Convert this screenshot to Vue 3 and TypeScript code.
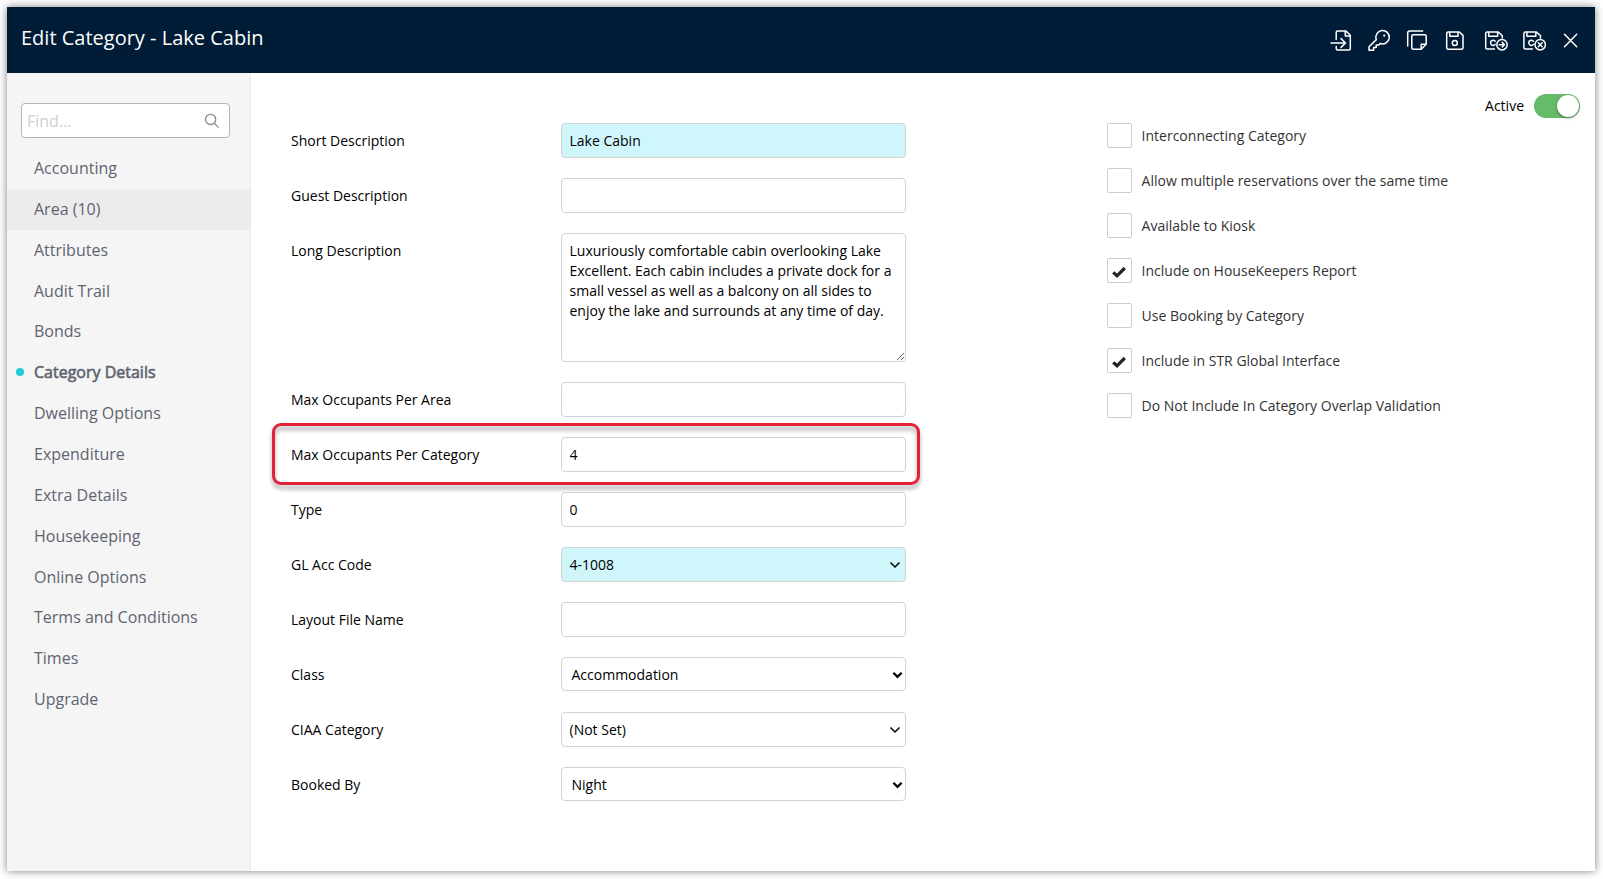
<script setup lang="ts">
import { ref } from 'vue'

interface Field {
  label: string
  kind: 'text' | 'area' | 'combo' | 'select'
  value: string
  required?: boolean
  marked?: boolean
}

interface Option {
  label: string
  checked: boolean
}

const navItems: string[] = [
  'Accounting', 'Area (10)', 'Attributes', 'Audit Trail', 'Bonds', 'Category Details',
  'Dwelling Options', 'Expenditure', 'Extra Details', 'Housekeeping', 'Online Options',
  'Terms and Conditions', 'Times', 'Upgrade',
]
const current = ref('Category Details')
const hovered = ref('Area (10)')
const search = ref('')
const active = ref(true)

const fields = ref<Field[]>([
  { label: 'Short Description', kind: 'text', value: 'Lake Cabin', required: true },
  { label: 'Guest Description', kind: 'text', value: '' },
  {
    label: 'Long Description',
    kind: 'area',
    value: 'Luxuriously comfortable cabin overlooking Lake Excellent. Each cabin includes a private dock for a small vessel as well as a balcony on all sides to enjoy the lake and surrounds at any time of day.',
  },
  { label: 'Max Occupants Per Area', kind: 'text', value: '' },
  { label: 'Max Occupants Per Category', kind: 'text', value: '4', marked: true },
  { label: 'Type', kind: 'text', value: '0' },
  { label: 'GL Acc Code', kind: 'combo', value: '4-1008', required: true },
  { label: 'Layout File Name', kind: 'text', value: '' },
  { label: 'Class', kind: 'select', value: 'Accommodation' },
  { label: 'CIAA Category', kind: 'combo', value: '(Not Set)' },
  { label: 'Booked By', kind: 'select', value: 'Night' },
])

const options = ref<Option[]>([
  { label: 'Interconnecting Category', checked: false },
  { label: 'Allow multiple reservations over the same time', checked: false },
  { label: 'Available to Kiosk', checked: false },
  { label: 'Include on HouseKeepers Report', checked: true },
  { label: 'Use Booking by Category', checked: false },
  { label: 'Include in STR Global Interface', checked: true },
  { label: 'Do Not Include In Category Overlap Validation', checked: false },
])
</script>

<template>
  <div class="page">
    <div class="dialog">
      <header class="bar">
        <h1 class="title">Edit Category - Lake Cabin</h1>
        <div class="tools">
          <svg class="tool" viewBox="0 0 28 24">
            <path d="M7.2 11.5V4.5Q7.2 3 8.7 3H17L21.3 7.3V20.6Q21.3 22.1 19.8 22.1H8.7Q7.2 22.1 7.2 20.6V18.5M16.3 3V8H21.3M2 15H16.6M12 10.6L16.5 15L12 19.4" />
          </svg>
          <svg class="tool" viewBox="0 0 28 24">
            <path d="M9.3 11.6A6.7 6.7 0 1 1 13.3 15.5L11.6 17.1H9.2V19.6H6.6V22.2H2V18.8Z" />
            <circle class="solid" cx="17.2" cy="7.6" r="1.1" />
          </svg>
          <svg class="tool" viewBox="0 0 28 24">
            <path d="M2.7 18V5Q2.7 3 4.7 3H17.6M8.3 6.7H19.7Q21.2 6.7 21.2 8.2V16.2L16.2 21.2H8.3Q6.8 21.2 6.8 19.7V8.2Q6.8 6.7 8.3 6.7ZM16.2 21V16.3H21" />
          </svg>
          <svg class="tool" viewBox="0 0 28 24">
            <path d="M5.2 4H16.4L20 7.4V19.8Q20 21.3 18.5 21.3H5.2Q3.7 21.3 3.7 19.8V5.5Q3.7 4 5.2 4ZM6.7 4V8.2H15V4" />
            <circle cx="11.8" cy="15" r="2.5" />
          </svg>
          <svg class="tool" viewBox="0 0 28 24">
            <path d="M13.5 21H6.2Q4.7 21 4.7 19.5V5.5Q4.7 4 6.2 4H17.3L21.3 7.8V10M7.7 4V8.2H16.6V4M14.2 13.2A2.6 2.6 0 1 0 14.2 16.4" />
            <circle cx="21" cy="16.7" r="5.2" />
            <path d="M18.2 16.7H23.5M21.2 14.4L23.5 16.7L21.2 19" />
          </svg>
          <svg class="tool" viewBox="0 0 28 24">
            <path d="M13.5 21H6.4Q4.9 21 4.9 19.5V5.5Q4.9 4 6.4 4H17.5L21.5 7.8V10M7.9 4V8.2H16.8V4M14.4 13.2A2.6 2.6 0 1 0 14.4 16.4" />
            <circle cx="21.2" cy="16.7" r="5.2" />
            <path d="M19.2 14.7L23.2 18.7M23.2 14.7L19.2 18.7" />
          </svg>
          <svg class="tool" viewBox="0 0 28 24">
            <path d="M7.5 6.3L19.7 18.7M19.7 6.3L7.5 18.7" />
          </svg>
        </div>
      </header>

      <div class="body">
        <aside class="side">
          <div class="find">
            <input v-model="search" class="find-input" placeholder="Find..." />
            <svg class="find-icon" viewBox="0 0 16 16">
              <circle cx="6.6" cy="6.4" r="5.1" />
              <path d="M10.2 10.2L14.6 14.6" />
            </svg>
          </div>
          <nav class="nav">
            <a
              v-for="item in navItems"
              :key="item"
              class="nav-item"
              :class="{ current: item === current, hovered: item === hovered }"
              @click="current = item"
            >{{ item }}</a>
          </nav>
        </aside>

        <main class="content">
          <section class="form">
            <div v-for="f in fields" :key="f.label" class="row" :class="{ marked: f.marked }">
              <label class="label">{{ f.label }}</label>
              <textarea v-if="f.kind === 'area'" v-model="f.value" class="control area" spellcheck="false"></textarea>
              <input v-else-if="f.kind === 'text'" v-model="f.value" class="control" :class="{ required: f.required }" />
              <div v-else class="control picker" :class="[f.kind, { required: f.required }]">
                <span>{{ f.value }}</span>
                <svg class="chevron" viewBox="0 0 12 8"><path d="M1.5 1.5L6 6L10.5 1.5" /></svg>
              </div>
            </div>
          </section>

          <section class="options">
            <label v-for="o in options" :key="o.label" class="option">
              <span class="box" @click="o.checked = !o.checked">
                <svg v-if="o.checked" class="tick" viewBox="0 0 14 12"><path d="M1.2 6.4L5 9.8L12.8 2" /></svg>
              </span>
              <span>{{ o.label }}</span>
            </label>
          </section>

          <div class="status">
            <span>Active</span>
            <span class="switch" :class="{ on: active }" @click="active = !active"><i class="knob"></i></span>
          </div>
        </main>
      </div>
    </div>
  </div>
</template>

<style>
body {
  background: #fff;
  overflow: hidden;
}
</style>

<style scoped>
* {
  box-sizing: border-box;
}

.page {
  min-height: 879px;
  padding: 7px;
}

.dialog {
  width: 1588px;
  height: 864px;
  display: flex;
  flex-direction: column;
  background: #fff;
  box-shadow: 0 0 8px rgba(0, 0, 0, 0.5);
  font-family: "Open Sans", "Noto Sans", sans-serif;
  font-size: 14px;
  color: #000;
}

.bar {
  height: 66px;
  flex: none;
  display: flex;
  justify-content: space-between;
  padding: 0 10px 0 14px;
  background: #001c36;
  color: #fff;
}

.title {
  margin: 16px 0 0;
  font-size: 20px;
  font-weight: 400;
  line-height: 30px;
}

.tools {
  display: flex;
  gap: 10px;
  margin-top: 21px;
}

.tool {
  width: 28px;
  height: 24px;
  fill: none;
  stroke: #fff;
  stroke-width: 1.5;
  stroke-linejoin: round;
  stroke-linecap: round;
}

.tool .solid {
  fill: #fff;
  stroke: none;
}

.body {
  flex: 1;
  display: flex;
}

.side {
  width: 244px;
  flex: none;
  padding-top: 30px;
  background: #f5f5f5;
  border-right: 1px solid #ebebeb;
}

.find {
  width: 209px;
  height: 35px;
  margin: 0 0 10px 14px;
  display: flex;
  align-items: center;
  padding: 0 9px 0 5px;
  background: #fff;
  border: 1px solid #b5b5b5;
  border-radius: 4px;
}

.find-input {
  flex: 1;
  min-width: 0;
  padding: 0;
  border: 0;
  outline: 0;
  background: none;
  font: 16px "Open Sans", sans-serif;
}

.find-input::placeholder {
  color: #cfcfcf;
}

.find-icon {
  width: 16px;
  height: 16px;
  fill: none;
  stroke: #8c8c8c;
  stroke-width: 1.3;
}

.nav-item {
  position: relative;
  display: block;
  height: 40.87px;
  padding-left: 27px;
  font-size: 16px;
  line-height: 40px;
  color: #5f6470;
}

.nav-item.hovered {
  background: #ececec;
}

.nav-item.current {
  -webkit-text-stroke: 0.6px #5f6470;
}

.nav-item.current::before {
  content: "";
  position: absolute;
  left: 9px;
  top: 16px;
  width: 8px;
  height: 8px;
  border-radius: 50%;
  background: #1fcbd6;
}

.content {
  flex: 1;
  display: flex;
  align-items: flex-start;
  padding-left: 40px;
}

.form {
  width: 615px;
  display: flex;
  flex-direction: column;
  gap: 20px;
  padding-top: 50px;
}

.row {
  position: relative;
  min-height: 35px;
  display: flex;
  align-items: flex-start;
}

.row.marked::after {
  content: "";
  box-sizing: border-box;
  position: absolute;
  left: -19px;
  top: -14px;
  width: 648px;
  height: 62px;
  border: 3px solid #e32137;
  border-radius: 9px;
  filter: drop-shadow(0 4px 2px rgba(0, 0, 0, 0.35));
  pointer-events: none;
}

.label {
  width: 270px;
  line-height: 35px;
}

.control {
  width: 345px;
  height: 35px;
  margin: 0;
  padding: 0 8px 0 7.5px;
  border: 1px solid #d2d2d2;
  border-radius: 4px;
  outline: 0;
  background: #fff;
  color: #000;
  font: 14px/20px "Open Sans", "Noto Sans", sans-serif;
}

.control.required {
  background: #cff6fb;
}

.area {
  height: 129px;
  padding: 7px 7.5px;
  resize: both;
}

.picker {
  display: flex;
  align-items: center;
  justify-content: space-between;
  padding-right: 4px;
}

.picker.select {
  height: 34px;
  padding: 1px 2px 0 9.5px;
}

.chevron {
  width: 12px;
  height: 8px;
  fill: none;
  stroke: #000;
  stroke-width: 1.5;
}

.select .chevron {
  width: 11px;
  stroke-width: 2.5;
}

.options {
  width: 360px;
  display: flex;
  flex-direction: column;
  gap: 20px;
  margin-left: 201px;
  padding-top: 50px;
  color: #333;
}

.option {
  height: 25px;
  display: flex;
  align-items: center;
  gap: 9.6px;
  white-space: nowrap;
}

.box {
  width: 25px;
  height: 25px;
  display: flex;
  align-items: center;
  justify-content: center;
  border: 1px solid #ccc;
  border-radius: 2px;
}

.tick {
  width: 14px;
  height: 12px;
  margin: 2px 1px 0 0;
  fill: none;
  stroke: #212529;
  stroke-width: 3.2;
}

.status {
  flex: 1;
  display: flex;
  align-items: center;
  justify-content: flex-end;
  gap: 10px;
  padding: 21px 15px 0 0;
}

.status > span:first-child {
  margin-top: -1px;
}

.switch {
  width: 46px;
  height: 24px;
  display: flex;
  padding: 1px;
  border-radius: 12px;
  background: #ccc;
}

.switch.on {
  justify-content: flex-end;
  background: #66bb6a;
}

.knob {
  width: 22px;
  height: 22px;
  border-radius: 50%;
  background: #fff;
  box-shadow: 0 1px 3px rgba(0, 0, 0, 0.4);
}
</style>
